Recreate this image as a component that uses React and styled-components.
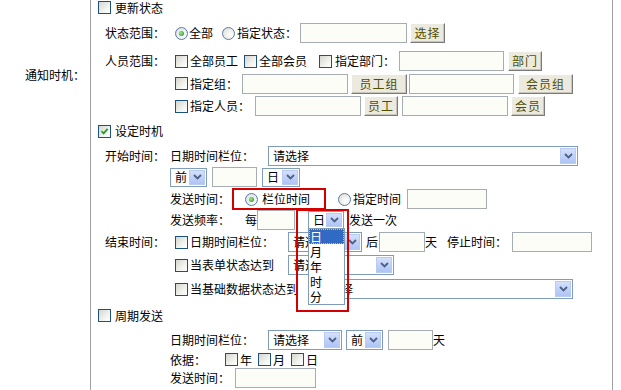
import React from "react";
import styled, { createGlobalStyle } from "styled-components";

const Global = createGlobalStyle`
  body {
    margin: 0;
    background: #fff;
    font-family: "Noto Sans CJK SC", "Noto Sans", sans-serif;
    font-size: 12px;
    color: #000;
  }
`;

const Page = styled.div`
  display: flex;
  height: 390px;
  overflow: hidden;
`;

const LabelCell = styled.div`
  width: 90px;
  flex-shrink: 0;
  border-right: 1px solid #a0a0a0;
  box-sizing: border-box;
  width: 91px;
  padding: 66px 5px 0 0;
  text-align: right;
  line-height: 18px;
`;

const MainCell = styled.div`
  width: 522px;
  flex-shrink: 0;
  box-sizing: border-box;
  border-right: 1px solid #a0a0a0;
  padding-left: 7px;
  display: flex;
  flex-direction: column;
`;

const Row = styled.div`
  display: flex;
  align-items: center;
  height: ${(p) => p.$h}px;
  white-space: nowrap;
  flex-shrink: 0;
`;

const Label = styled.div`
  width: 65px;
  padding-left: 7px;
  flex-shrink: 0;
  line-height: 14px;
`;

const Text = styled.span`
  margin-left: ${(p) => p.$ml || 0}px;
  line-height: 14px;
`;

const Box = styled.span`
  display: inline-block;
  flex-shrink: 0;
  width: 13px;
  height: 13px;
  box-sizing: border-box;
  margin-left: ${(p) => p.$ml || 0}px;
  border: 1px solid #1c5180;
  background: linear-gradient(135deg, #d6d6cf 0%, #f2f2ee 60%, #fff 100%);
  position: relative;
  svg {
    position: absolute;
    left: 1px;
    top: 1px;
  }
`;

const RadioDot = styled.span`
  display: inline-block;
  flex-shrink: 0;
  width: 13px;
  height: 13px;
  box-sizing: border-box;
  margin-left: ${(p) => p.$ml || 0}px;
  border: 1px solid #5a7aa6;
  border-radius: 50%;
  background: radial-gradient(circle at 65% 65%, #fff 0%, #e6e6e0 70%, #d2d2ca 100%);
  position: relative;
  &::after {
    content: "";
    display: ${(p) => (p.$on ? "block" : "none")};
    position: absolute;
    left: 3px;
    top: 3px;
    width: 5px;
    height: 5px;
    border-radius: 50%;
    background: radial-gradient(circle at 40% 40%, #a8e8a0 0%, #3fb03a 60%, #2a8a25 100%);
  }
`;

const Field = styled.span`
  display: inline-block;
  flex-shrink: 0;
  width: ${(p) => p.$w}px;
  height: 20px;
  box-sizing: border-box;
  margin-left: ${(p) => p.$ml || 0}px;
  border: 1px solid #a5acb2;
  background: #fbfdf6;
`;

const Btn = styled.span`
  display: inline-flex;
  align-items: center;
  justify-content: center;
  flex-shrink: 0;
  width: ${(p) => p.$w}px;
  height: 20px;
  box-sizing: border-box;
  margin-left: ${(p) => p.$ml || 0}px;
  border: 1px solid;
  border-color: #fff #7a7a7a #7a7a7a #fff;
  box-shadow: inset -1px -1px 0 #c8c6bb;
  background: #ece9df;
  color: #4f4f00;
  letter-spacing: 1px;
  line-height: 14px;
`;

const SelectBox = styled.span`
  display: inline-flex;
  align-items: center;
  justify-content: space-between;
  flex-shrink: 0;
  width: ${(p) => p.$w}px;
  height: ${(p) => p.$h || 20}px;
  box-sizing: border-box;
  margin-left: ${(p) => p.$ml || 0}px;
  border: 1px solid #7f9db9;
  background: #fff;
  padding: 1px 1px 1px 4px;
  line-height: 14px;
  position: relative;
`;

const Arrow = styled.span`
  display: inline-flex;
  align-items: center;
  justify-content: center;
  width: 16px;
  height: 100%;
  box-sizing: border-box;
  border: 1px solid #b9cbf3;
  background: linear-gradient(180deg, #d4e0fc 0%, #bccff8 60%, #aec4f5 100%);
`;

const Mark = styled.div`
  display: flex;
  align-items: center;
  height: 22px;
  width: 94px;
  box-sizing: border-box;
  margin-left: 2px;
  border: 2px solid #d40000;
  padding-left: 11px;
`;

const Anchor = styled.span`
  position: relative;
  display: inline-flex;
  margin-left: ${(p) => p.$ml || 0}px;
`;

const MarkFrame = styled.span`
  position: absolute;
  left: -12px;
  top: -2px;
  width: 53px;
  height: 103px;
  box-sizing: border-box;
  border: 2px solid #d40000;
  z-index: 3;
  pointer-events: none;
`;

const List = styled.div`
  position: absolute;
  left: 0;
  top: 17px;
  width: 37px;
  box-sizing: border-box;
  border: 1px solid #7f9db9;
  background: #fff;
  z-index: 2;
  display: flex;
  flex-direction: column;
`;

const Item = styled.div`
  height: 15px;
  line-height: 15px;
  padding-left: 1px;
  background: ${(p) => (p.$on ? "#316ac5" : "transparent")};
  color: ${(p) => (p.$on ? "#fff" : "#000")};
  outline: ${(p) => (p.$on ? "1px dotted #f0c060" : "none")};
  outline-offset: -1px;
`;

const Check = ({ on, ml }) => (
  <Box $ml={ml}>
    {on && (
      <svg width="9" height="9" viewBox="0 0 9 9">
        <path d="M1.5 4.2 L3.6 6.4 L7.6 1.8" fill="none" stroke="#21a121" strokeWidth="1.8" />
      </svg>
    )}
  </Box>
);

const Select = ({ w, ml, h, children }) => (
  <SelectBox $w={w} $ml={ml} $h={h}>
    <span>{children}</span>
    <Arrow>
      <svg width="9" height="6" viewBox="0 0 9 6">
        <path d="M1 1 L4.5 4.5 L8 1" fill="none" stroke="#4d6185" strokeWidth="1.8" />
      </svg>
    </Arrow>
  </SelectBox>
);

export default function App() {
  return (
    <>
      <Global />
      <Page>
        <LabelCell>通知时机：</LabelCell>
        <MainCell>
          <Row $h={15}>
            <Check />
            <Text $ml={4}>更新状态</Text>
          </Row>
          <Row $h={36}>
            <Label>状态范围：</Label>
            <RadioDot $ml={5} $on />
            <Text $ml={1}>全部</Text>
            <RadioDot $ml={9} />
            <Text $ml={2}>指定状态：</Text>
            <Field $w={107} $ml={3} />
            <Btn $w={35} $ml={3}>选择</Btn>
          </Row>
          <Row $h={20}>
            <Label>人员范围：</Label>
            <Check ml={5} />
            <Text $ml={2}>全部员工</Text>
            <Check ml={6} />
            <Text $ml={2}>全部会员</Text>
            <Check ml={12} />
            <Text $ml={3}>指定部门：</Text>
            <Field $w={105} $ml={4} />
            <Btn $w={34} $ml={4}>部门</Btn>
          </Row>
          <Row $h={25}>
            <Label />
            <Check ml={5} />
            <Text $ml={2}>指定组：</Text>
            <Field $w={106} $ml={4} />
            <Btn $w={56} $ml={3}>员工组</Btn>
            <Field $w={105} $ml={2} />
            <Btn $w={55} $ml={4}>会员组</Btn>
          </Row>
          <Row $h={20}>
            <Label />
            <Check ml={5} />
            <Text $ml={2}>指定人员：</Text>
            <Field $w={106} $ml={5} />
            <Btn $w={34} $ml={3}>员工</Btn>
            <Field $w={106} $ml={4} />
            <Btn $w={34} $ml={3}>会员</Btn>
          </Row>
          <Row $h={30}>
            <Check on />
            <Text $ml={4}>设定时机</Text>
          </Row>
          <Row $h={19}>
            <Label>开始时间：</Label>
            <Text>日期时间栏位：</Text>
            <Select w={310} ml={14}>请选择</Select>
          </Row>
          <Row $h={24}>
            <Label />
            <Select w={37} h={19}>前</Select>
            <Field $w={45} $ml={5} />
            <Select w={38} ml={5} h={19}>日</Select>
          </Row>
          <Row $h={20}>
            <Label />
            <Text>发送时间：</Text>
            <Mark>
              <RadioDot $on />
              <Text $ml={4}>栏位时间</Text>
            </Mark>
            <RadioDot $ml={12} />
            <Text $ml={2}>指定时间</Text>
            <Field $w={80} $ml={6} />
          </Row>
          <Row $h={22}>
            <Label />
            <Text>发送频率：</Text>
            <Text $ml={15}>每</Text>
            <Field $w={38} />
            <Anchor $ml={13}>
              <Select w={36} h={18}>日</Select>
              <MarkFrame />
              <List>
                <Item $on>日</Item>
                <Item>月</Item>
                <Item>年</Item>
                <Item>时</Item>
                <Item>分</Item>
              </List>
            </Anchor>
            <Text $ml={5}>发送一次</Text>
          </Row>
          <Row $h={22}>
            <Label>结束时间：</Label>
            <Check ml={5} />
            <Text $ml={2}>日期时间栏位：</Text>
            <Select w={74} ml={14}>请选择</Select>
            <Text $ml={4}>后</Text>
            <Field $w={46} $ml={1} />
            <Text>天</Text>
            <Text $ml={10}>停止时间：</Text>
            <Field $w={80} $ml={5} />
          </Row>
          <Row $h={24}>
            <Label />
            <Check ml={5} />
            <Text $ml={2}>当表单状态达到</Text>
            <Select w={106} ml={14}>请选择</Select>
          </Row>
          <Row $h={24}>
            <Label />
            <Check ml={5} />
            <Text $ml={2}>当基础数据状态达到</Text>
            <Select w={261} ml={14}>请选择</Select>
          </Row>
          <Row $h={29}>
            <Check />
            <Text $ml={4}>周期发送</Text>
          </Row>
          <Row $h={19}>
            <Label />
            <Text>日期时间栏位：</Text>
            <Select w={74} ml={14}>请选择</Select>
            <Select w={37} ml={4}>前</Select>
            <Field $w={45} $ml={5} />
            <Text>天</Text>
          </Row>
          <Row $h={21}>
            <Label />
            <Text>依据：</Text>
            <Check ml={19} />
            <Text $ml={2}>年</Text>
            <Check ml={6} />
            <Text $ml={2}>月</Text>
            <Check ml={6} />
            <Text $ml={2}>日</Text>
          </Row>
          <Row $h={16}>
            <Label />
            <Text>发送时间：</Text>
            <Field $w={81} $ml={5} />
          </Row>
        </MainCell>
      </Page>
    </>
  );
}
